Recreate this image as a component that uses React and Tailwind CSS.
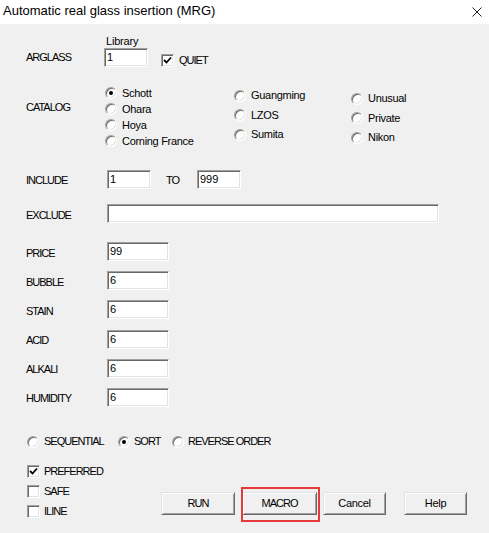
import React from "react";

const sunken =
  "bg-white border border-t-[#a0a0a0] border-l-[#a0a0a0] border-b-white border-r-white shadow-[inset_1px_1px_0_#696969,inset_-1px_-1px_0_#e3e3e3]";

const Field = ({ className = "", value }) => (
  <div className={`h-[19px] ${sunken} flex items-center pl-[2px] text-[11px] ${className}`}>
    {value}
  </div>
);

const Radio = ({ on }) => (
  <span className={`w-[12px] h-[12px] rounded-full ${sunken} flex items-center justify-center shrink-0`}>
    {on && <span className="w-[4px] h-[4px] rounded-full bg-black" />}
  </span>
);

const Check = ({ on }) => (
  <span className={`w-[13px] h-[13px] ${sunken} flex items-center justify-center shrink-0`}>
    {on && (
      <svg width="9" height="9" viewBox="0 0 9 9">
        <path d="M1 4 L3.5 6.5 L8 1.5" fill="none" stroke="#000" strokeWidth="1.8" />
      </svg>
    )}
  </span>
);

const Button = ({ className = "", children }) => (
  <div
    className={`h-[23px] flex items-center justify-center bg-[#f0f0f0] border border-t-[#e3e3e3] border-l-[#e3e3e3] border-b-[#696969] border-r-[#696969] shadow-[inset_1px_1px_0_#fff,inset_-1px_-1px_0_#a0a0a0] ${className}`}
  >
    {children}
  </div>
);

const Caps = ({ className = "", children }) => (
  <span className={`tracking-[-1px] ${className}`}>{children}</span>
);

const Opt = ({ on, label, className = "" }) => (
  <div className={`flex items-center gap-[5px] tracking-[-0.3px] ${className}`}>
    <Radio on={on} />
    <span>{label}</span>
  </div>
);

export default function App() {
  return (
    <div className="w-[489px] h-[533px] flex flex-col font-['Liberation_Sans',Arial,sans-serif] text-[11px] leading-[13px] text-black">
      {/* title bar */}
      <div className="h-[24px] shrink-0 bg-white flex items-center justify-between pl-[3px] pr-[7px] pb-[2px] text-[13px] leading-[16px]">
        <span>Automatic real glass insertion (MRG)</span>
        <svg width="10" height="10" viewBox="0 0 10 10" className="mt-[1px]">
          <path d="M0.5 0.5 L9.5 9.5 M9.5 0.5 L0.5 9.5" stroke="#222" strokeWidth="1" />
        </svg>
      </div>

      <div className="flex-1 bg-[#f0f0f0] pt-[11px]">
        <div className="ml-[106px] h-[13px] tracking-[-0.2px]">Library</div>
        <div className="flex items-center h-[19px] pl-[26px]">
          <Caps className="w-[78px]">ARGLASS</Caps>
          <Field className="w-[44px]" value="1" />
          <div className="flex items-center ml-[13px] mt-[6px] gap-[5px]">
            <Check on />
            <Caps>QUIET</Caps>
          </div>
        </div>

        {/* catalog */}
        <div className="mt-[18px] flex pl-[26px]">
          <div className="w-[79px] pt-[16px]">
            <Caps>CATALOG</Caps>
          </div>
          <div className="w-[129px] flex flex-col">
            <Opt on label="Schott" className="h-[16px]" />
            <Opt label="Ohara" className="h-[16px]" />
            <Opt label="Hoya" className="h-[16px]" />
            <Opt label="Corning France" className="h-[16px]" />
          </div>
          <div className="w-[117px] pt-[1px] flex flex-col">
            <Opt label="Guangming" className="h-[19.5px]" />
            <Opt label="LZOS" className="h-[19.5px]" />
            <Opt label="Sumita" className="h-[19.5px]" />
          </div>
          <div className="pt-[4px] flex flex-col">
            <Opt label="Unusual" className="h-[19.5px]" />
            <Opt label="Private" className="h-[19.5px]" />
            <Opt label="Nikon" className="h-[19.5px]" />
          </div>
        </div>

        {/* include / exclude */}
        <div className="mt-[21px] flex items-center h-[19px] pl-[26px]">
          <Caps className="w-[81px] pt-[2px]">INCLUDE</Caps>
          <Field className="w-[44px]" value="1" />
          <Caps className="ml-[15px] w-[31px] pt-[2px]">TO</Caps>
          <Field className="w-[44px]" value="999" />
        </div>
        <div className="mt-[15px] flex items-center h-[19px] pl-[26px]">
          <Caps className="w-[81px] pt-[3px]">EXCLUDE</Caps>
          <Field className="w-[332px]" value="" />
        </div>

        {/* properties */}
        <div className="mt-[19px] flex flex-col gap-[10.2px] pl-[26px]">
          {[
            ["PRICE", "99"],
            ["BUBBLE", "6"],
            ["STAIN", "6"],
            ["ACID", "6"],
            ["ALKALI", "6"],
            ["HUMIDITY", "6"],
          ].map(([label, value]) => (
            <div key={label} className="flex items-center h-[19px]">
              <Caps className="w-[81px] pt-[3px]">{label}</Caps>
              <Field className="w-[62px]" value={value} />
            </div>
          ))}
        </div>

        {/* order */}
        <div className="mt-[28.5px] h-[13px] flex items-center pl-[27px]">
          <div className="w-[91px] flex items-center gap-[5px]">
            <Radio />
            <Caps>SEQUENTIAL</Caps>
          </div>
          <div className="w-[54px] flex items-center gap-[4px]">
            <Radio on />
            <Caps>SORT</Caps>
          </div>
          <div className="flex items-center gap-[4px]">
            <Radio />
            <Caps>REVERSE ORDER</Caps>
          </div>
        </div>

        {/* flags + buttons */}
        <div className="mt-[13.5px] flex pl-[27px]">
          <div className="w-[134px] flex flex-col">
            {[
              ["PREFERRED", true],
              ["SAFE", false],
              ["ILINE", false],
            ].map(([label, on]) => (
              <div key={label} className="h-[20px] flex items-center gap-[4px]">
                <Check on={on} />
                <Caps>{label}</Caps>
              </div>
            ))}
          </div>
          <div className="pt-[30px] flex">
            <Button className="w-[74px]">
              <Caps>RUN</Caps>
            </Button>
            <div className="relative ml-[7px]">
              <Button className="w-[75px]">
                <Caps>MACRO</Caps>
              </Button>
              <div className="absolute left-[-1px] top-[-5px] w-[79px] h-[35px] border-2 border-[#e63a3a]" />
            </div>
            <Button className="w-[63px] ml-[6px] tracking-[-0.3px]">Cancel</Button>
            <Button className="w-[63px] ml-[18px] tracking-[-0.3px]">Help</Button>
          </div>
        </div>
      </div>
    </div>
  );
}
